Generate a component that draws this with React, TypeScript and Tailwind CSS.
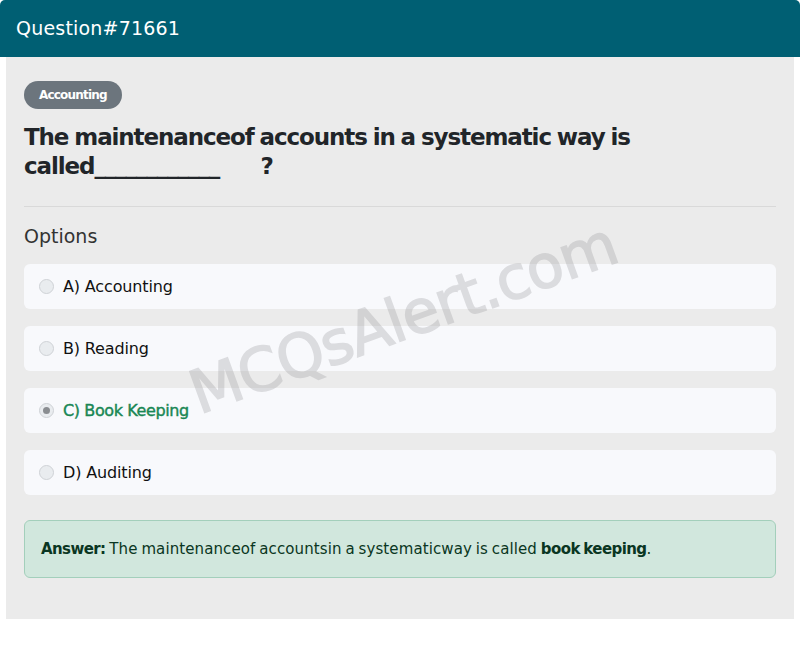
import React from "react";

const options = [
  { label: "A) Accounting", correct: false },
  { label: "B) Reading", correct: false },
  { label: "C) Book Keeping", correct: true },
  { label: "D) Auditing", correct: false },
];

export default function App() {
  return (
    <div className="w-[800px] h-[650px] bg-white relative overflow-hidden" style={{ fontFamily: '"DejaVu Sans", sans-serif' }}>
      <div className="rounded-t-[5px] bg-[#005f73] h-[57px] flex items-center px-4">
        <span className="text-white text-[19px] tracking-[0.2px]">Question#71661</span>
      </div>
      <div className="px-[6px]">
        <div className="bg-[#ebebeb] h-[562px] px-[18px] pt-[24px]">
          <span className="inline-flex items-center h-[28px] px-[15px] rounded-full bg-[#6c757d] text-white text-[12px] font-bold tracking-[-0.8px]">Accounting</span>
          <h1 className="mt-[14px] text-[23px] leading-[29px] font-bold text-[#212529] tracking-[-1.1px] [word-spacing:-1px]">
            The maintenanceof accounts in a systematic way is called____________ &nbsp; &nbsp; &nbsp; ?
          </h1>
          <div className="mt-[25px] border-t border-[#d9d9d9]"></div>
          <div className="mt-[17px] text-[19px] text-[#333] leading-[24px]">Options</div>
          <div className="mt-[16px] flex flex-col gap-[17px]">
            {options.map((o) => (
              <div key={o.label} className="h-[45px] rounded-[6px] bg-[#f8f9fc] flex items-center pl-[15px]">
                <span className="w-[15px] h-[15px] rounded-full border border-[#cfd2d6] bg-[#e9ecef] flex items-center justify-center">
                  {o.correct && <span className="w-[7px] h-[7px] rounded-full bg-[#8a8d91]"></span>}
                </span>
                <span className={`ml-[9px] text-[16px] ${o.correct ? "text-[#198754] tracking-[-0.4px] [-webkit-text-stroke:0.4px_#198754]" : "text-[#111] tracking-[-0.15px]"}`}>{o.label}</span>
              </div>
            ))}
          </div>
          <div className="mt-[25px] h-[58px] rounded-[6px] bg-[#d1e7dd] border border-[#a3cfbb] flex items-center px-[16px] text-[15px] text-[#0a3622] tracking-[0.1px] [word-spacing:-1px]">
            <span><b className="tracking-[-0.6px]">Answer:</b> The maintenanceof accountsin a systematicway is called <b className="tracking-[-0.6px]">book keeping</b>.</span>
          </div>
        </div>
      </div>
      <div className="pointer-events-none absolute left-[403px] top-[318px] -translate-x-1/2 -translate-y-1/2 -rotate-[20deg] text-[60px] text-[#9a9a9e] opacity-30 whitespace-nowrap tracking-[-1px] [-webkit-text-stroke:1.5px_#9a9a9e]">
        MCQsAlert.com
      </div>
    </div>
  );
}
